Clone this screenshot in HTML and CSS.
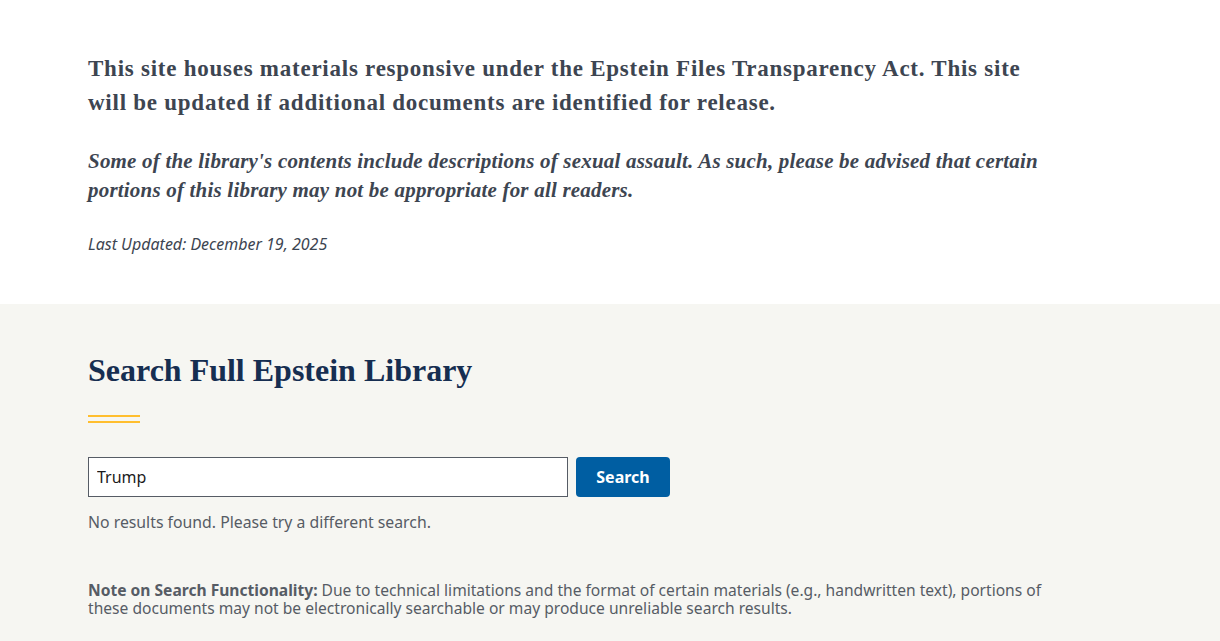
FILE: index.html
```html
<!DOCTYPE html>
<html lang="en">
<head>
<meta charset="utf-8">
<title>Epstein Library</title>
<link rel="stylesheet" href="styles.css">
</head>
<body>
<section class="intro">
  <div class="container">
    <p class="lead">This site houses materials responsive under the Epstein Files Transparency Act. This site will be updated if additional documents are identified for release.</p>
    <p class="warning">Some of the library's contents include descriptions of sexual assault. As such, please be advised that certain portions of this library may not be appropriate for all readers.</p>
    <p class="updated">Last Updated: December 19, 2025</p>
  </div>
</section>
<section class="search">
  <div class="container">
    <h2 class="search-title">Search Full Epstein Library</h2>
    <div class="rule"></div>
    <form class="search-form">
      <input class="search-input" type="text" value="Trump">
      <button class="search-btn" type="button">Search</button>
    </form>
    <p class="no-results">No results found. Please try a different search.</p>
    <p class="note"><strong>Note on Search Functionality:</strong> Due to technical limitations and the format of certain materials (e.g., handwritten text), portions of these documents may not be electronically searchable or may produce unreliable search results.</p>
  </div>
</section>
</body>
</html>
```

FILE: styles.css
```css
html, body {
  margin: 0;
  padding: 0;
}
body {
  background: #f6f6f2;
  font-family: "Noto Sans", "Liberation Sans", sans-serif;
  color: #3d4551;
}
.container {
  padding: 0 88px;
  max-width: 960px;
}
.intro {
  background: #ffffff;
  padding-top: 52px;
  padding-bottom: 50px;
}
.lead {
  margin: 0;
  font-family: "Liberation Serif", "DejaVu Serif", serif;
  font-weight: bold;
  font-size: 23px;
  line-height: 34px;
  letter-spacing: 0.75px;
  color: #3d4551;
}
.warning {
  margin: 27px 0 0;
  font-family: "Liberation Serif", "DejaVu Serif", serif;
  font-weight: bold;
  font-style: italic;
  font-size: 21px;
  line-height: 29px;
  letter-spacing: 0.2px;
  color: #3d4551;
}
.updated {
  margin: 29px 0 0;
  font-style: italic;
  font-size: 16px;
  line-height: 20px;
  color: #3d4551;
}
.search {
  padding-top: 46px;
  padding-bottom: 40px;
}
.search-title {
  margin: 0;
  font-family: "Liberation Serif", "DejaVu Serif", serif;
  font-weight: bold;
  font-size: 32px;
  line-height: 40px;
  color: #162e51;
}
.rule {
  margin-top: 25px;
  width: 52px;
  height: 4px;
  border-top: 2px solid #ffbe2e;
  border-bottom: 2px solid #ffbe2e;
}
.search-form {
  display: flex;
  gap: 8px;
  margin-top: 34px;
}
.search-input {
  box-sizing: border-box;
  width: 480px;
  height: 40px;
  margin: 0;
  padding: 0 8px;
  border: 1px solid #565c65;
  border-radius: 0;
  background: #fff;
  font-family: "Noto Sans", "Liberation Sans", sans-serif;
  font-size: 16px;
  color: #1b1b1b;
}
.search-btn {
  box-sizing: border-box;
  width: 94px;
  height: 40px;
  border: 0;
  border-radius: 4px;
  background: #005ea2;
  color: #fff;
  font-family: "Noto Sans", "Liberation Sans", sans-serif;
  font-weight: bold;
  font-size: 16px;
}
.no-results {
  margin: 14px 0 0;
  font-size: 15.8px;
  line-height: 22px;
  color: #565c65;
}
.note {
  margin: 48px 0 0;
  font-size: 15.6px;
  line-height: 18px;
  color: #565c65;
}
.note strong {
  font-weight: bold;
}
```
